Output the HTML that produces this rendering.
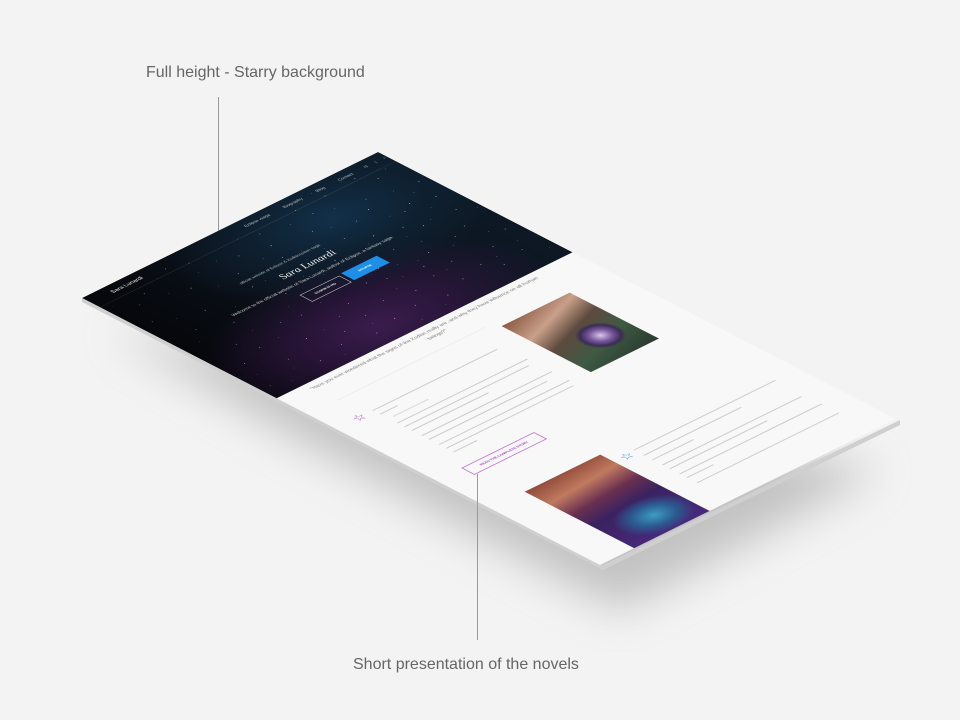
<!DOCTYPE html>
<html><head><meta charset="utf-8"><style>
html,body{margin:0;padding:0;width:960px;height:720px;overflow:hidden;background:#f3f3f3;font-family:"Liberation Sans",sans-serif;position:relative}
.lbl{position:absolute;color:#666;font-size:16px;white-space:nowrap}
.vl{position:absolute;width:1px;background:#9a9a9a}
#pg{position:absolute;left:82px;top:298px;width:1000px;height:1800px;transform-origin:0 0;transform:matrix(0.296,-0.146,0.2878,0.1483,0,0);background:#f8f8f8;overflow:hidden}
#hero{position:absolute;left:0;top:0;width:1000px;height:676px;background:
radial-gradient(ellipse 600px 400px at 700px 150px,#123049 0%,rgba(16,40,60,0.6) 40%,rgba(0,0,0,0) 80%),
radial-gradient(ellipse 600px 380px at 420px 600px,#3a1c4d 0%,rgba(50,22,66,0.7) 40%,rgba(0,0,0,0) 85%),
linear-gradient(90deg,#05070b 0%,#0b111a 40%,#0d1824 100%);overflow:hidden}
.stars{position:absolute;left:0;top:0;width:3px;height:3px;border-radius:50%;background:transparent;}
.t{position:absolute;white-space:nowrap;color:#ddd}
.g{position:absolute;height:4px;background:#cdcdcd;border-radius:2px}
.cov{position:absolute}
</style></head><body>
<div class="lbl" style="left:146px;top:64px">Full height - Starry background</div>
<div class="vl" style="left:218px;top:97px;height:166px"></div>
<div class="lbl" style="left:353px;top:656px">Short presentation of the novels</div>

<svg width="960" height="720" style="position:absolute;left:0;top:0">
<defs><filter id="b" x="-30%" y="-30%" width="160%" height="160%"><feGaussianBlur stdDeviation="22"/></filter></defs>
<polygon points="110,330 300,440 620,610 880,470 600,420" fill="#9a9a9a" opacity="0.55" filter="url(#b)"/>
<polygon points="82,298 603,565 900,420 900,425 603,570 82,302" fill="#cfcfcf"/>
</svg>

<div id="pg">
 <div id="hero">
  <div class="stars" style="box-shadow:
   40px 200px #8aa,120px 90px #9bc,180px 340px #bbc,220px 150px #9ab,260px 420px #caa3d6,300px 60px #8ab,330px 250px #ccd,380px 500px #b9c,410px 120px #9cd,450px 380px #ddd,480px 200px #acd,520px 80px #bde,560px 300px #cde,590px 450px #c9d,620px 160px #bdf,650px 240px #9df,680px 100px #aef,700px 360px #cce,730px 200px #9df,760px 60px #bdf,790px 300px #cdf,820px 140px #9cf,850px 420px #bcd,880px 230px #adf,910px 90px #9ce,940px 330px #cde,970px 170px #abd,60px 500px #a9b,90px 300px #899,150px 560px #b8c,200px 620px #c9d,250px 520px #dbe,290px 600px #c8d,340px 560px #eae,390px 620px #d9e,430px 540px #caf,470px 600px #dbe,510px 520px #c9e,550px 590px #eaf,600px 540px #bbe,640px 610px #dce,680px 520px #cbe,720px 580px #bce,760px 500px #acd,800px 560px #bbd,840px 600px #ccd,880px 520px #abd,920px 580px #bcd,960px 480px #9bc,110px 420px #99a,170px 250px #aab,240px 40px #8ab,350px 180px #bcd,440px 470px #dcd,500px 140px #cef,570px 30px #bce,610px 400px #ddf,660px 60px #acf,710px 280px #dff,750px 430px #cdf,790px 180px #bef,830px 330px #aef,870px 50px #9bd,900px 400px #cdf,950px 250px #bde,30px 620px #778,75px 120px #667,140px 470px #99a,320px 430px #cbd,365px 330px #bbd,540px 430px #dde,695px 470px #ccf,845px 250px #cef;"></div>
  <div class="stars" style="width:2px;height:2px;box-shadow:
   25px 80px #667,55px 350px #778,95px 230px #889,130px 600px #98a,165px 130px #889,205px 470px #a8b,235px 290px #99a,275px 190px #8ab,310px 520px #b9c,355px 100px #8ab,395px 420px #aab,425px 260px #9ab,465px 60px #9bc,495px 330px #abd,535px 210px #9cd,575px 500px #b9d,605px 100px #acd,635px 360px #bcd,665px 180px #9ce,705px 440px #abd,735px 120px #acf,775px 380px #bcd,805px 240px #9df,835px 40px #9bd,865px 320px #acd,895px 160px #9ce,925px 460px #abd,955px 70px #9bc,985px 360px #abd,45px 560px #86a,85px 640px #87a,185px 400px #98a,265px 640px #a8c,325px 380px #a9b,375px 250px #9ab,415px 580px #c9d,455px 300px #aac,545px 360px #bbd,585px 240px #acd,625px 470px #bbd,675px 300px #bdf,725px 520px #bcd,765px 340px #bcd,815px 450px #abd,855px 560px #abc,905px 280px #acd,945px 540px #9ab,975px 620px #99a,115px 40px #667,195px 60px #778,285px 110px #889,445px 170px #9bc,515px 250px #acd,655px 420px #ccd,745px 30px #9bd,925px 200px #9cd,605px 640px #b9c,515px 650px #c9d;"></div>
  <div class="t" style="left:70px;top:20px;font-size:18px;color:#eee">Sara Lunardi</div>
  <div style="position:absolute;left:0;top:62px;width:1000px;height:1px;background:rgba(255,255,255,0.22)"></div>
  <div class="t" style="left:520px;top:22px;font-size:14px;color:#bbb;word-spacing:4px">Eclipse saga &nbsp;&nbsp;&nbsp;&nbsp; Biography &nbsp;&nbsp;&nbsp;&nbsp; Blog &nbsp;&nbsp;&nbsp;&nbsp; Contact &nbsp;&nbsp;&nbsp; IT &nbsp;&nbsp;|&nbsp;&nbsp; ⌕</div>
  <div class="t" style="left:320px;top:212px;font-size:13px;color:#bbb">official website of Eclipse &amp; Zodiacspawn saga</div>
  <div class="t" style="left:410px;top:250px;font-size:34px;font-family:'Liberation Serif',serif;font-style:italic;color:#f2f2f2">Sara Lunardi</div>
  <div class="t" style="left:200px;top:308px;font-size:15px;color:#ccc">Welcome to the official website of Sara Lunardi, author of Eclipse, a fantasy saga</div>
  <div style="position:absolute;left:385px;top:360px;width:130px;height:40px;border:2px solid #ccc;color:#eee;font-size:10px;font-weight:bold;text-align:center;line-height:40px">SCOPRI DI PIÙ</div>
  <div style="position:absolute;left:530px;top:355px;width:120px;height:46px;background:#1e8fe6;color:#fff;font-size:10px;font-weight:bold;text-align:center;line-height:46px">ECLIPSE</div>
 </div>
 <div class="t" style="left:90px;top:695px;font-size:16px;color:#777">"Have you ever wondered what the signs of the Zodiac really are, and why they have influence on all human</div>
 <div class="t" style="left:460px;top:722px;font-size:16px;color:#777">beings?"</div>
 <div style="position:absolute;left:100px;top:785px;width:500px;height:2px;background:#e6e6e6"></div>
 <div class="cov" style="left:630px;top:810px;width:230px;height:310px;background:
  radial-gradient(circle at 140px 200px,#d9c8e8 0,#7b5aa0 28px,#3a2c55 50px,rgba(0,0,0,0) 62px),
  linear-gradient(160deg,#8a5a44 0%,#c9a08a 25%,#5d4a3e 45%,#3e5a44 70%,#2a3a30 100%)"></div>
 <div style="position:absolute;left:60px;top:860px;font-size:40px;color:#a43fc8">☆</div>
 <div class="g" style="left:125px;top:880px;width:420px"></div>
 <div class="g" style="left:125px;top:905px;width:60px"></div>
 <div class="g" style="left:140px;top:935px;width:120px;background:#dadada"></div>
 <div class="g" style="left:125px;top:965px;width:440px"></div>
 <div class="g" style="left:125px;top:990px;width:420px"></div>
 <div class="g" style="left:125px;top:1015px;width:260px"></div>
 <div class="g" style="left:125px;top:1050px;width:440px"></div>
 <div class="g" style="left:125px;top:1075px;width:400px"></div>
 <div class="g" style="left:125px;top:1110px;width:440px"></div>
 <div class="g" style="left:125px;top:1135px;width:430px"></div>
 <div class="g" style="left:125px;top:1160px;width:80px"></div>
 <div style="position:absolute;left:85px;top:1230px;width:240px;height:40px;border:3px solid #c46ad6;color:#a43fc8;font-size:11px;font-weight:bold;text-align:center;line-height:40px">READ THE COMPLETE STORY</div>
 <div class="cov" style="left:115px;top:1420px;width:255px;height:400px;background:
  radial-gradient(ellipse 150px 110px at 145px 300px,#3f9cc0 0,#2b5d92 40%,rgba(40,40,110,0) 75%),
  linear-gradient(175deg,#8f4a3a 0%,#c07a60 20%,#6a3050 38%,#3a2260 55%,#4a2a80 100%)"></div>
 <div style="position:absolute;left:392px;top:1448px;font-size:40px;color:#2a8ee6">☆</div>
 <div class="g" style="left:442px;top:1460px;width:480px"></div>
 <div class="g" style="left:442px;top:1495px;width:330px"></div>
 <div class="g" style="left:442px;top:1525px;width:140px"></div>
 <div class="g" style="left:442px;top:1560px;width:470px"></div>
 <div class="g" style="left:442px;top:1585px;width:330px"></div>
 <div class="g" style="left:442px;top:1620px;width:480px"></div>
 <div class="g" style="left:442px;top:1645px;width:90px"></div>
 <div class="g" style="left:442px;top:1680px;width:480px"></div>
</div>
<div class="vl" style="left:477px;top:474px;height:166px"></div>
</body></html>
